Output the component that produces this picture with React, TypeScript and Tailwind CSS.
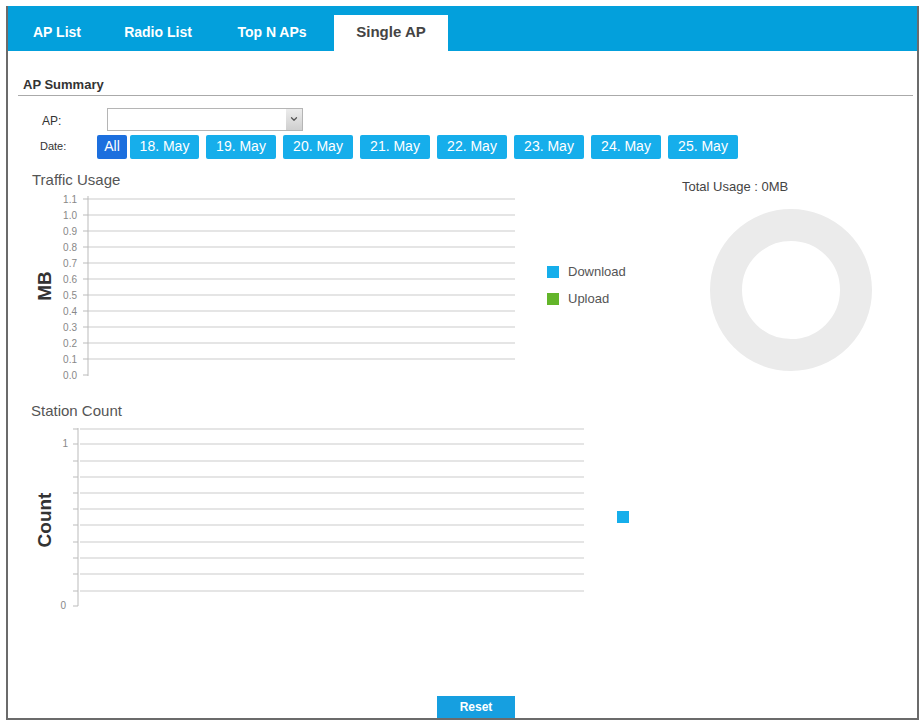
import { ChevronDown } from 'lucide-react';

const tabs = [
  { label: 'AP List', w: 'w-[98px]' },
  { label: 'Radio List', w: 'w-[104px]' },
  { label: 'Top N APs', w: 'w-[124px]' },
];

const dates = ['19. May', '20. May', '21. May', '22. May', '23. May', '24. May', '25. May'];

const trafficTicks = ['1.1', '1.0', '0.9', '0.8', '0.7', '0.6', '0.5', '0.4', '0.3', '0.2', '0.1', '0.0'];
const stationGrid = [9, 24, 41, 57, 73, 89, 105, 122, 138, 154, 171];

function TrafficChart() {
  return (
    <svg width="512" height="195" className="block">
      {trafficTicks.map((t, i) => {
        const y = 9 + i * 16;
        return (
          <g key={t}>
            <text x="69" y={y + 3.5} textAnchor="end" fontSize="10" fill="#888">
              {t}
            </text>
            <line x1="75" x2="80" y1={y} y2={y} stroke="#bbb" strokeWidth="1" />
            {i < 11 && <line x1="80" x2="507" y1={y} y2={y} stroke="#dcdcdc" strokeWidth="1.5" />}
          </g>
        );
      })}
      <line x1="80" x2="80" y1="6" y2="186" stroke="#bbb" strokeWidth="1" />
      <text
        x="36"
        y="96"
        textAnchor="middle"
        dominantBaseline="central"
        fontSize="19"
        fontWeight="700"
        fill="#333"
        transform="rotate(-90 36 96)"
      >
        MB
      </text>
    </svg>
  );
}

function StationChart() {
  return (
    <svg width="630" height="192" className="block">
      {stationGrid.map((y) => (
        <g key={y}>
          <line x1="65" x2="70" y1={y} y2={y} stroke="#bbb" strokeWidth="1" />
          <line x1="72" x2="576" y1={y} y2={y} stroke="#dcdcdc" strokeWidth="1.5" />
        </g>
      ))}
      <line x1="65" x2="70" y1="186" y2="186" stroke="#bbb" strokeWidth="1" />
      <line x1="70" x2="70" y1="8" y2="186" stroke="#bbb" strokeWidth="1" />
      <text x="60" y="26.5" textAnchor="end" fontSize="10" fill="#888">1</text>
      <text x="58" y="188.5" textAnchor="end" fontSize="10" fill="#888">0</text>
      <text
        x="36"
        y="100"
        textAnchor="middle"
        dominantBaseline="central"
        fontSize="19"
        fontWeight="700"
        fill="#333"
        transform="rotate(-90 36 100)"
      >
        Count
      </text>
      <rect x="609" y="91" width="12" height="12" fill="#16aeeb" />
    </svg>
  );
}

function Donut() {
  return (
    <svg width="170" height="170" className="block">
      <circle cx="85" cy="85" r="65" fill="none" stroke="#ebebeb" strokeWidth="32" />
    </svg>
  );
}

export default function App() {
  return (
    <div className="w-[920px] h-[721px] bg-white overflow-hidden font-['Liberation_Sans',Arial,sans-serif]">
      <div className="ml-[6px] mt-[6px] w-[913px] h-[714px] border-x-2 border-b-2 border-[#6b6b6b] flex flex-col">
        {/* Tabs */}
        <div className="h-[45px] bg-[#03a0dc] flex items-end">
          {tabs.map((t) => (
            <div
              key={t.label}
              className={`${t.w} h-[36px] flex items-center justify-center text-[14px] font-bold text-white`}
            >
              {t.label}
            </div>
          ))}
          <div className="w-[114px] h-[36px] bg-white flex items-center justify-center text-[15px] font-bold text-[#444]">
            Single AP
          </div>
        </div>

        {/* AP Summary */}
        <div className="mt-[26px] ml-[10px] mr-[4px] border-b border-[#aaa] pb-[2px]">
          <div className="pl-[5px] text-[13px] leading-[16px] font-bold text-[#333]">AP Summary</div>
        </div>

        <div className="mt-[12px] flex items-center">
          <div className="w-[99px] pl-[34px] text-[12px] text-[#333] pt-[4px]">AP:</div>
          <div className="w-[196px] h-[23px] border border-[#b5b5b5] flex justify-end">
            <div className="w-[16px] h-full bg-gradient-to-b from-[#ececec] to-[#cfcfcf] flex items-center justify-center text-[#555]">
              <ChevronDown size={10} strokeWidth={3} />
            </div>
          </div>
        </div>

        <div className="mt-[4px] flex items-center">
          <div className="w-[89px] pl-[32px] text-[11px] text-[#333]">Date:</div>
          <div className="w-[30px] h-[24px] rounded-[2px] bg-[#1c6fde] flex items-center justify-center text-[14px] text-white">
            All
          </div>
          <div className="ml-[3px] w-[69px] h-[24px] rounded-[2px] bg-[#16aeeb] flex items-center justify-center text-[14px] text-white">
            18. May
          </div>
          {dates.map((d) => (
            <div
              key={d}
              className="ml-[7px] w-[70px] h-[24px] rounded-[2px] bg-[#16aeeb] flex items-center justify-center text-[14px] text-white"
            >
              {d}
            </div>
          ))}
        </div>

        {/* Traffic usage row */}
        <div className="mt-[12px] flex items-start">
          <div className="w-[512px]">
            <div className="pl-[24px] text-[15px] leading-[18px] text-[#555] mb-[1px]">Traffic Usage</div>
            <TrafficChart />
          </div>
          <div className="ml-[27px] w-[135px] mt-[95px] flex flex-col gap-[15px]">
            <div className="flex items-center gap-[9px]">
              <div className="w-[12px] h-[12px] bg-[#16aeeb]" />
              <span className="text-[13px] leading-[12px] text-[#555]">Download</span>
            </div>
            <div className="flex items-center gap-[9px]">
              <div className="w-[12px] h-[12px] bg-[#63b52a]" />
              <span className="text-[13px] leading-[12px] text-[#555]">Upload</span>
            </div>
          </div>
          <div className="mt-[8px]">
            <div className="text-[13px] leading-[16px] text-[#444]">Total Usage : 0MB</div>
            <div className="mt-[10px] ml-[24px]">
              <Donut />
            </div>
          </div>
        </div>

        {/* Station count */}
        <div className="mt-[17px] pl-[23px] text-[15px] leading-[18px] text-[#555]">Station Count</div>
        <StationChart />

        <div className="mt-[84px] ml-[429px]">
          <button className="w-[78px] h-[22px] bg-[#169fe0] text-white text-[12px] font-bold">Reset</button>
        </div>
      </div>
    </div>
  );
}
